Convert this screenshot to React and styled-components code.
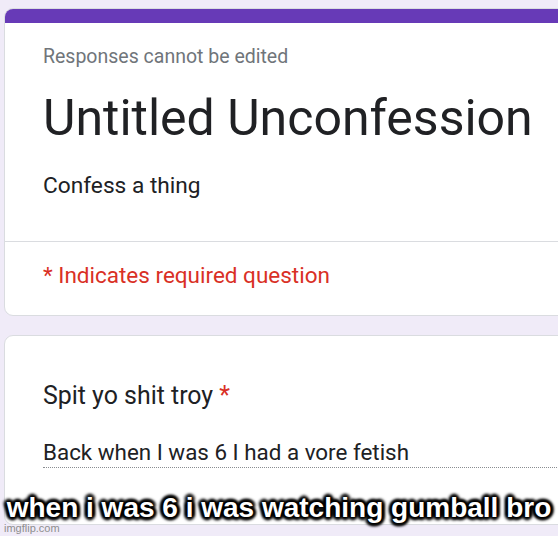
import styled, { createGlobalStyle } from "styled-components";

const GlobalStyle = createGlobalStyle`
  html, body {
    margin: 0;
    padding: 0;
    background: #f0ebf8;
    overflow: hidden;
  }
  body {
    font-family: Roboto, "Liberation Sans", Arial, sans-serif;
  }
`;

const Page = styled.main`
  position: relative;
  width: 558px;
  height: 536px;
  padding: 8px 0 0 4px;
  box-sizing: border-box;
  display: flex;
  flex-direction: column;
  gap: 19px;
`;

const Card = styled.section`
  width: 600px;
  background: #fff;
  border: 1px solid #dadce0;
  border-radius: 9px;
  box-sizing: border-box;
  overflow: hidden;
  height: ${({ $height }) => $height}px;
  display: flex;
  flex-direction: column;
`;

const TopBar = styled.div`
  height: 15px;
  background: #673ab7;
  margin: -1px -1px 0 -1px;
`;

const Header = styled.div`
  padding: 22px 0 0 38px;
  display: flex;
  flex-direction: column;
`;

const Notice = styled.div`
  font-size: 19.5px;
  line-height: 24px;
  color: #70757a;
`;

const Title = styled.h1`
  margin: 21px 0 0;
  font-weight: 400;
  font-size: 50px;
  line-height: 56px;
  color: #202124;
`;

const Description = styled.div`
  margin-top: 26px;
  font-size: 22.7px;
  line-height: 28px;
  color: #202124;
`;

const Divider = styled.div`
  height: 1px;
  background: #dadce0;
  margin-top: 41px;
`;

const Required = styled.div`
  padding: 19px 0 0 38px;
  font-size: 22.5px;
  line-height: 28px;
  color: #d93025;
`;

const Question = styled.div`
  padding: 45px 0 0 38px;
  font-size: 24.9px;
  line-height: 30px;
  color: #202124;
`;

const Star = styled.span`
  color: #d93025;
`;

const Answer = styled.div`
  margin: 27px 0 0 38px;
  font-size: 22.4px;
  line-height: 28px;
  color: #202124;
  border-bottom: 1px dotted #8a8d91;
  padding-bottom: 1px;
  width: 560px;
`;

const Caption = styled.div`
  position: absolute;
  left: 0;
  right: 0;
  top: 491px;
  text-align: center;
  font-family: "Liberation Sans", Arial, sans-serif;
  font-weight: 700;
  font-size: 28px;
  line-height: 34px;
  color: #fff;
  white-space: nowrap;
  text-shadow:
    2px 2px 3px #000, -2px -2px 3px #000, 2px -2px 3px #000, -2px 2px 3px #000,
    0 3px 3px #000, 0 -3px 3px #000, 3px 0 3px #000, -3px 0 3px #000,
    0 0 2px #000, 0 0 2px #000;
`;

const Watermark = styled.div`
  position: absolute;
  left: 4px;
  bottom: 2px;
  font-family: "Liberation Sans", Arial, sans-serif;
  font-size: 11px;
  color: #8e8e8e;
`;

export default function App() {
  return (
    <>
      <GlobalStyle />
      <Page>
        <Card $height={308}>
          <TopBar />
          <Header>
            <Notice>Responses cannot be edited</Notice>
            <Title>Untitled Unconfession</Title>
            <Description>Confess a thing</Description>
          </Header>
          <Divider />
          <Required>* Indicates required question</Required>
        </Card>
        <Card $height={190}>
          <Question>
            Spit yo shit troy <Star>*</Star>
          </Question>
          <Answer>Back when I was 6 I had a vore fetish</Answer>
        </Card>
        <Caption>when i was 6 i was watching gumball bro</Caption>
        <Watermark>imgflip.com</Watermark>
      </Page>
    </>
  );
}
